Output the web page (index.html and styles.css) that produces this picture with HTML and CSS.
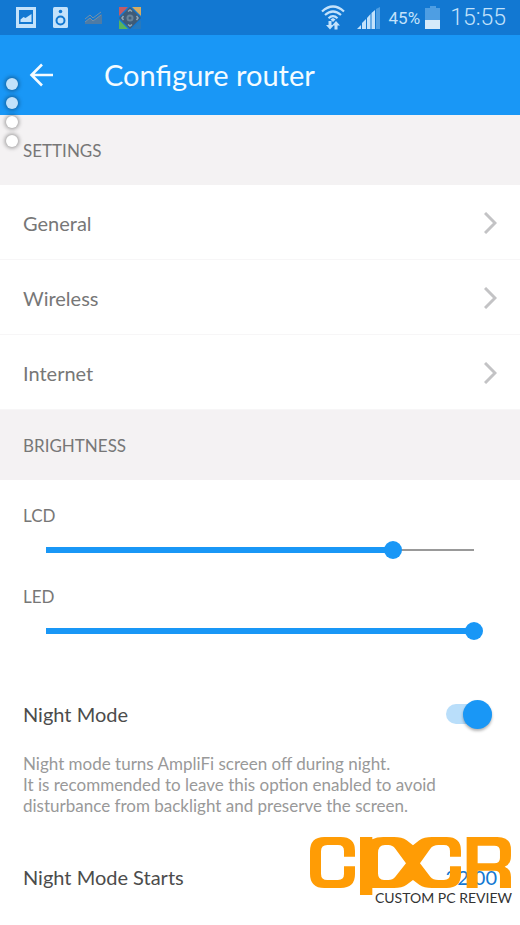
FILE: index.html
```html
<!DOCTYPE html>
<html lang="en">
<head>
<meta charset="utf-8">
<meta name="viewport" content="width=device-width, initial-scale=1">
<title>Configure router</title>
<link rel="stylesheet" href="styles.css">
</head>
<body>
<div class="status">
  <div class="status-group notices">
    <svg width="20" height="21" viewBox="0 0 20 21" aria-hidden="true"><path fill="#c3e2fb" fill-rule="evenodd" d="M0 0h20v21H0zM3 3v14h14V3z"/><path fill="#c3e2fb" d="M4.500 15v-2.500l3-2.500 2 1 6-4v8z"/></svg>
    <svg width="15" height="21" viewBox="0 0 15 21" aria-hidden="true"><rect width="15" height="21" rx="1.500" fill="#c3e2fb"/><circle cx="7.500" cy="4.500" r="1.800" fill="#1278d2"/><circle cx="7.500" cy="13.500" r="4" fill="none" stroke="#1278d2" stroke-width="2"/></svg>
    <svg width="17" height="13" viewBox="0 0 17 13" aria-hidden="true"><path fill="#4e7ba5" d="M0 13v-2l5-4 3 3 9-7v10z"/><path fill="none" stroke="#7590a8" d="M0 8l5-4 3 3 8-6M0 11l5-4 3 3 8-6"/></svg>
    <svg width="22" height="22" viewBox="0 0 22 22" aria-hidden="true"><path fill="#c15b66" d="M0 0h9L0 9z"/><path fill="#d3ac63" d="M13 0h9v9z"/><path fill="#58b45d" d="M0 13l9 9H0z"/><path fill="#2779bd" d="M22 13v9h-9z"/><path fill="#3e5b78" d="M11 0l11 11-11 11L0 11z"/><circle cx="11" cy="11" r="3.500" fill="#67839a"/><path fill="none" stroke="#90a7b8" stroke-width="1.500" d="M9 4.500l2-1.500 2 1.500M9 17.500l2 1.500 2-1.500M4.500 9L3 11l1.500 2M17.500 9l1.500 2-1.500 2"/><circle cx="11" cy="11" r="1.500" fill="#415f7b"/></svg>
  </div>
  <div class="status-group system">
    <svg class="wifi" width="24" height="25" viewBox="0 0 24 25" aria-hidden="true"><g fill="none" stroke="#c3e2fb" stroke-width="2.200"><path d="M1 6.500Q12-3.500 23 6.500M4 10q8-7 16 0M7.500 13.200q4.500-4 9 0"/></g><path fill="#c3e2fb" d="M9.500 14.500l2.500-1.500 2.500 1.500L12 17zM7.500 16h3v4H13l-4 4.500L5 20h2.500zM13.500 24.500v-4H11l4-4.500 4 4.500h-2.500v4z"/></svg>
    <svg width="23" height="22" viewBox="0 0 23 22" aria-hidden="true"><path fill="#c3e2fb" d="M0 22l4-4v4zM5 22v-6l4-4v10zM10 22V11l3.500-4v15zM14.500 22V6L18 3v19z"/><path fill="#4e9ee3" d="M19 22V2l4-2v22z"/></svg>
    <span class="percent">45%</span>
    <svg width="15" height="23" viewBox="0 0 15 23" aria-hidden="true"><path fill="#4e9ee3" d="M5 0h6v2h4v12H0V2h5z"/><path fill="#d5eafa" d="M0 14h15v9H0z"/></svg>
    <time class="clock">15:55</time>
  </div>
</div>
<header class="bar">
  <button class="back" type="button" aria-label="Back"><svg width="24" height="24" viewBox="0 0 24 24" aria-hidden="true"><path fill="none" stroke="#f4fbff" stroke-width="2.600" d="M24 12H2.500M13 1.500L2.500 12 13 22.500"/></svg></button>
  <h1>Configure router</h1>
  <div class="edge-dots" aria-hidden="true"><i class="tinted"></i><i class="tinted"></i><i></i><i></i></div>
</header>
<main>
  <h2>SETTINGS</h2>
  <nav class="links">
    <a href="#general">General<svg width="13" height="22" viewBox="0 0 13 22" aria-hidden="true"><path d="M1 1l10 10L1 21"/></svg></a>
    <a href="#wireless">Wireless<svg width="13" height="22" viewBox="0 0 13 22" aria-hidden="true"><path d="M1 1l10 10L1 21"/></svg></a>
    <a href="#internet">Internet<svg width="13" height="22" viewBox="0 0 13 22" aria-hidden="true"><path d="M1 1l10 10L1 21"/></svg></a>
  </nav>
  <h2>BRIGHTNESS</h2>
  <section class="sliders">
    <div class="level"><label for="lcd">LCD</label><input id="lcd" type="range" min="0" max="100" value="81" style="--level:0.81"></div>
    <div class="level"><label for="led">LED</label><input id="led" type="range" min="0" max="100" value="100" style="--level:1"></div>
  </section>
  <section class="night">
    <div class="option"><label for="night">Night Mode</label><input id="night" class="switch" type="checkbox" role="switch" checked></div>
    <p>Night mode turns AmpliFi screen off during night.<br>It is recommended to leave this option enabled to avoid disturbance from backlight and preserve the screen.</p>
    <div class="option">
      <label for="starts">Night Mode Starts</label><button id="starts" class="time" type="button">22:00</button>
      <div class="watermark">
        <svg viewBox="0 0 606 178" role="img" aria-label="CPCR">
          <g fill="#ff9c05" fill-rule="evenodd">
            <path d="M135 59H102V42Q102 24 84 24H52Q33 24 33 43V110Q33 129 52 129H84Q102 129 102 111V88H135V112Q135 153 92 153H43Q0 153 0 110V43Q0 0 43 0H92Q135 0 135 41z"/>
            <path d="M150 0H187V7Q200 0 220 0H252Q276 0 290 10L309 25 328 10Q342 0 366 0H410Q453 0 453 41V59H420V42Q420 24 402 24H385Q369 24 361 35L330 79 361 119Q369 129 385 129H402Q420 129 420 111V88H453V112Q453 153 410 153H366Q342 153 328 143L309 129 290 143Q276 153 252 153H187V174H150zM204 49V109Q204 129 222 129H235Q248 129 256 119L288 79 256 35Q248 24 235 24H225Q204 24 204 49z"/>
            <path d="M470 0H562Q603 0 603 38V56Q603 82 584 89 603 96 603 120V153H570V117Q570 101 554 101H503V153H470zM503 26V79H553Q570 79 570 63V42Q570 26 553 26z"/>
          </g>
        </svg>
        <span>CUSTOM PC REVIEW</span>
      </div>
    </div>
  </section>
</main>
</body>
</html>
```
FILE: styles.css
```css
* { box-sizing: border-box; }
body {
  margin: 0;
  background: #fff;
  color: #777;
  font-family: Lato, "Liberation Sans", sans-serif;
  font-size: 20px;
  line-height: 24px;
}
svg { display: block; flex: none; }
button { padding: 0; border: 0; background: none; font: inherit; cursor: pointer; }

.status {
  display: flex;
  justify-content: space-between;
  height: 35px;
  padding: 0 14px 0 16px;
  background: #1278d2;
  color: #c3e2fb;
  font-family: Roboto, sans-serif;
}
.status-group { display: flex; align-items: center; }
.notices { gap: 17px; }
.system { gap: 5px; }
.wifi { margin-right: 7px; }
.percent { margin-left: 4px; font-size: 17px; }
.clock { margin-left: 5px; font-size: 23px; font-weight: 300; line-height: 35px; }

.bar {
  position: relative;
  display: flex;
  align-items: center;
  gap: 51px;
  height: 80px;
  padding: 0 29px;
  background: #1997f6;
  color: #f4fbff;
}
.bar h1 { margin: 0; font-size: 29px; font-weight: 400; line-height: 36px; }
.edge-dots {
  position: absolute;
  top: 43px;
  left: 6px;
  display: grid;
  gap: 7px;
}
.edge-dots i {
  width: 12px;
  height: 12px;
  border-radius: 50%;
  background: #fff;
  box-shadow: 0 0 4px 1px rgba(0, 0, 0, .4);
}
.edge-dots .tinted { background: #c1e2fb; }

h2 {
  margin: 0;
  padding: 25px 23px 23px;
  background: #f4f2f3;
  color: #777;
  font-size: 17px;
  font-weight: 400;
  line-height: 22px;
}
.links a {
  display: flex;
  align-items: center;
  justify-content: space-between;
  height: 75px;
  padding: 2px 23px 0;
  border-bottom: 1px solid #f7f6f7;
  color: inherit;
  text-decoration: none;
}
.links path { fill: none; stroke: #c3c3c5; stroke-width: 3; }

.sliders { display: grid; gap: 20px; padding: 24px 23px 0; }
.level label { display: block; font-size: 17px; }
.level input {
  display: block;
  width: calc(100% - 28px);
  height: 18px;
  margin: 13px 14px 6px;
  appearance: none;
  background:
    linear-gradient(#1997f6, #1997f6) 9px center / calc((100% - 18px) * var(--level)) 6px no-repeat,
    linear-gradient(#999, #999) 9px center / calc(100% - 18px) 2px no-repeat;
}
.level input::-webkit-slider-thumb {
  width: 18px;
  height: 18px;
  appearance: none;
  border-radius: 50%;
  background: #1997f6;
}

.night { padding: 53px 23px 24px; }
.option {
  position: relative;
  display: flex;
  align-items: center;
  justify-content: space-between;
  height: 30px;
  color: #4c4c4c;
}
.switch {
  display: flex;
  align-items: center;
  justify-content: flex-end;
  width: 46px;
  height: 20px;
  margin: 0 5px 0 0;
  appearance: none;
  border-radius: 10px;
  background: #b9defa;
}
.switch::before {
  width: 29px;
  height: 29px;
  border-radius: 50%;
  background: #1997f6;
  box-shadow: 0 2px 3px rgba(0, 0, 0, .3);
  content: "";
}
.night p { margin: 24px 0 46px; color: #999; font-size: 17px; line-height: 21px; }
.time { color: #1278d2; }
.watermark {
  position: absolute;
  top: -25px;
  right: -15px;
  width: 202px;
  color: #333;
  font-size: 14px;
  line-height: 18px;
  text-align: right;
}
.watermark span { display: block; margin-top: -7px; }
```
